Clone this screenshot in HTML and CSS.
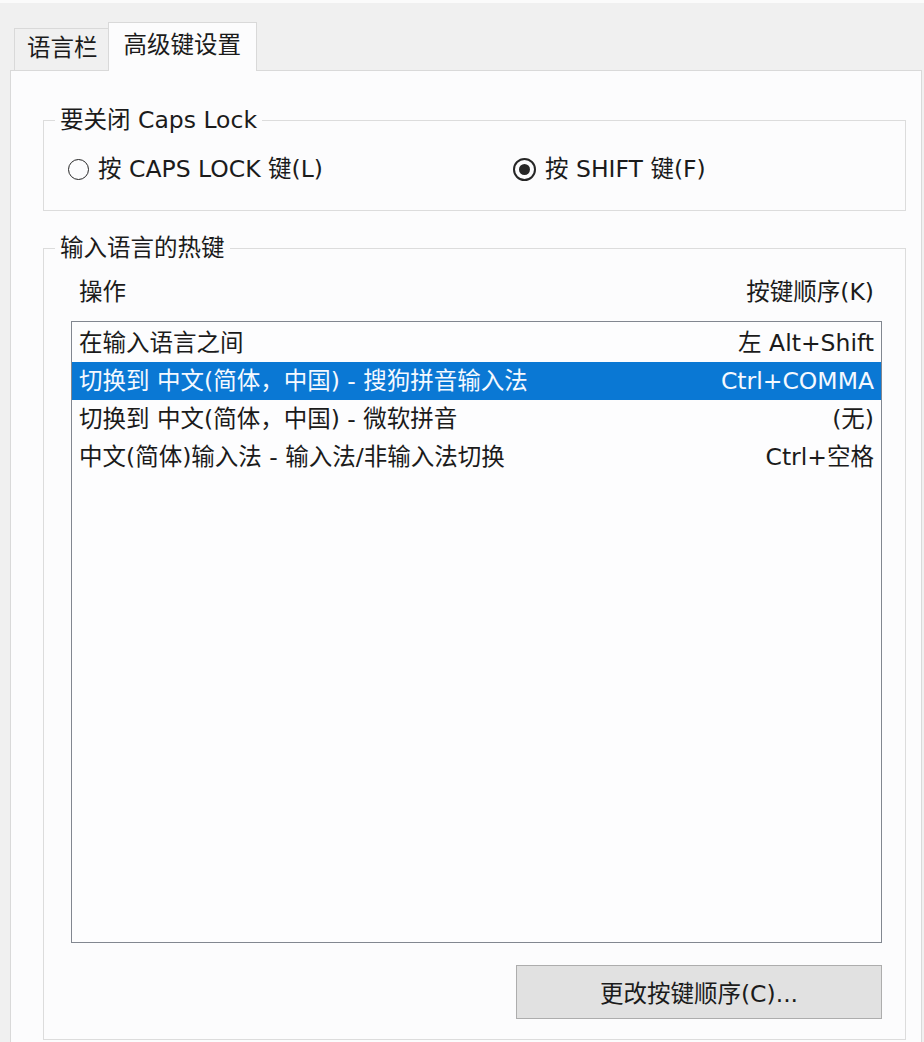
FILE: index.html
```html
<!DOCTYPE html>
<html>
  <head>
    <meta charset="UTF-8">
    <title>文本服务和输入语言</title>
    <link rel="stylesheet" href="styles.css">
  </head>
  <body>
  <div class="window">
    <div class="tabs">
      <div class="tab">语言栏</div>
      <div class="tab active">高级键设置</div>
    </div>

    <div class="panel">
      <fieldset class="group caps">
        <legend>要关闭 Caps Lock</legend>
        <div class="radios">
          <label class="radio"><span class="circle"></span>按 CAPS LOCK 键(L)</label>
          <label class="radio checked"><span class="circle"></span>按 SHIFT 键(F)</label>
        </div>
      </fieldset>

      <fieldset class="group hotkeys">
        <legend>输入语言的热键</legend>
        <div class="cols">
          <span>操作</span>
          <span>按键顺序(K)</span>
        </div>
        <div class="list">
          <div class="row"><span>在输入语言之间</span><span>左 Alt+Shift</span></div>
          <div class="row selected"><span>切换到 中文(简体，中国) - 搜狗拼音输入法</span><span>Ctrl+COMMA</span></div>
          <div class="row"><span>切换到 中文(简体，中国) - 微软拼音</span><span>(无)</span></div>
          <div class="row"><span>中文(简体)输入法 - 输入法/非输入法切换</span><span>Ctrl+空格</span></div>
        </div>
        <div class="actions">
          <button class="btn">更改按键顺序(C)...</button>
        </div>
      </fieldset>
    </div>
  </div>
  </body>
</html>
```

FILE: styles.css
```css
html, body {
  margin: 0;
  padding: 0;
  background: #f0f0f0;
  height: 100%;
  overflow: hidden;
}

body {
  font-family: "DejaVu Sans", "Noto Sans CJK SC", sans-serif;
  font-size: 23.5px;
  color: #1b1b1b;
}

.window {
  border-top: 3px solid #fbfbfb;
  height: 100%;
  box-sizing: border-box;
}

/* tab strip */
.tabs {
  display: flex;
  align-items: flex-end;
  height: 67px;
  padding-left: 14px;
}

.tab {
  height: 42px;
  box-sizing: border-box;
  padding: 0 10px 0 12px;
  line-height: 38px;
  border: 1px solid #d9d9d9;
  border-bottom: none;
  background: #f0f0f0;
}

.tab.active {
  height: 49px;
  margin-bottom: -1px;
  margin-left: -1px;
  padding: 0 15px;
  line-height: 44px;
  background: #fcfcfd;
  position: relative;
  z-index: 1;
}

/* tab page */
.panel {
  margin-left: 10px;
  width: 912px;
  height: 1000px;
  box-sizing: border-box;
  border: 1px solid #d9d9d9;
  border-bottom: none;
  background: #fcfcfd;
  padding: 34px 0 0 32px;
}

.group {
  width: 863px;
  box-sizing: border-box;
  margin: 0;
  border: 1px solid #dcdcdc;
  min-inline-size: 0;
}

.group legend {
  padding: 0 5px;
  line-height: 30px;
}

.caps {
  padding: 19px 0 26px 24px;
}
.caps legend {
  margin-left: -13px;
}

.radios {
  display: grid;
  grid-template-columns: 445px 1fr;
  height: 30px;
  line-height: 30px;
}

.radio {
  display: flex;
  align-items: center;
  gap: 9px;
}

.circle {
  width: 21px;
  height: 21px;
  box-sizing: border-box;
  border: 1.6px solid #262626;
  border-radius: 50%;
  display: flex;
  align-items: center;
  justify-content: center;
}

.checked .circle {
  width: 23px;
  height: 23px;
  border-width: 2px;
}

.checked .circle::after {
  content: "";
  width: 11px;
  height: 11px;
  border-radius: 50%;
  background: #262626;
}

.hotkeys {
  margin-top: 22px;
  padding: 14px 23px 20px 27px;
}
.hotkeys legend {
  margin-left: -16px;
}

.cols {
  display: flex;
  justify-content: space-between;
  padding: 0 8px;
  height: 30px;
  line-height: 30px;
}

.list {
  margin-top: 14px;
  height: 622px;
  box-sizing: border-box;
  border: 1px solid #828790;
  background: #fdfdfe;
  padding: 2px 0 0 0;
}

.row {
  display: flex;
  justify-content: space-between;
  height: 38px;
  line-height: 38px;
  padding: 0 7px;
  white-space: nowrap;
}

.row.selected {
  background: #0a78d4;
  color: #f4f9ff;
}

.actions {
  display: flex;
  justify-content: flex-end;
  margin-top: 22px;
}

.btn {
  width: 366px;
  height: 54px;
  font-family: inherit;
  font-size: 23.5px;
  color: #1b1b1b;
  background: #e1e1e1;
  border: 1px solid #adadad;
  border-radius: 0;
  padding: 0;
}
```
